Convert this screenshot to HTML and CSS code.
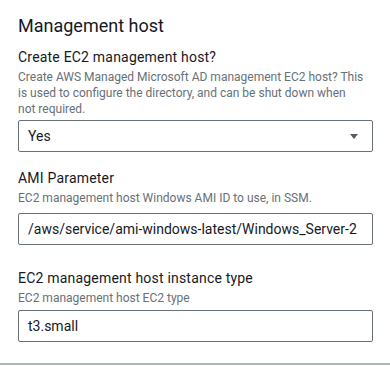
FILE: index.html
```html
<!DOCTYPE html>
<html lang="en">
<head>
    <meta charset="UTF-8">
    <meta name="viewport" content="width=device-width, initial-scale=1.0">
    <title>Management host</title>
    <link rel="stylesheet" href="styles.css">
</head>
<body>
    <div class="section">
        <h2 class="section-title">Management host</h2>

        <!-- Create host -->
        <div class="field field-create">
            <label class="field-label">Create EC2 management host?</label>
            <div class="field-desc">Create AWS Managed Microsoft AD management EC2 host? This is used to configure the directory, and can be shut down when not&nbsp;required.</div>
            <div class="select">
                <span class="select-value">Yes</span>
                <svg class="select-arrow" width="8" height="5" viewBox="0 0 8 5"><path d="M0 0h8L4 5z" fill="#545b64"/></svg>
            </div>
        </div>

        <!-- AMI -->
        <div class="field field-ami">
            <label class="field-label">AMI Parameter</label>
            <div class="field-desc">EC2 management host Windows AMI ID to use, in SSM.</div>
            <div class="input"><span class="input-value">/aws/service/ami-windows-latest/Windows_Server-2</span></div>
        </div>

        <!-- Instance type -->
        <div class="field field-type">
            <label class="field-label">EC2 management host instance type</label>
            <div class="field-desc">EC2 management host EC2 type</div>
            <div class="input"><span class="input-value">t3.small</span></div>
        </div>
    </div>
</body>
</html>
```

FILE: styles.css
```css
/* General Styles */
body {
    margin: 0;
    font-family: Roboto, "Liberation Sans", Arial, sans-serif;
    color: #16191f;
    background-color: #fff;
}

.section {
    box-sizing: border-box;
    height: 365px;
    padding: 15px 17px 0 18px;
    border-bottom: 2px solid #aab7b8;
}

.section-title {
    font-size: 18px;
    font-weight: 400;
    line-height: 22px;
    margin: 0 0 10px 0;
}

.field-label {
    display: block;
    font-size: 14px;
    line-height: 20px;
    letter-spacing: 0.2px;
}

.field-desc {
    font-size: 12px;
    line-height: 16px;
    color: #687078;
    margin-top: 2px;
}

.select,
.input {
    box-sizing: border-box;
    display: flex;
    align-items: center;
    height: 32px;
    border: 1px solid #687078;
    border-radius: 2px;
    padding: 0 14px 0 9px;
    font-size: 14px;
    white-space: nowrap;
    overflow: hidden;
}

.select {
    justify-content: space-between;
}

.field-create .select {
    margin-top: 3px;
}

.field-create {
    margin-bottom: 16px;
}

.field-ami .input {
    margin-top: 7px;
}

.field-ami {
    margin-bottom: 23px;
}

.field-type .input {
    margin-top: 4px;
}
```
